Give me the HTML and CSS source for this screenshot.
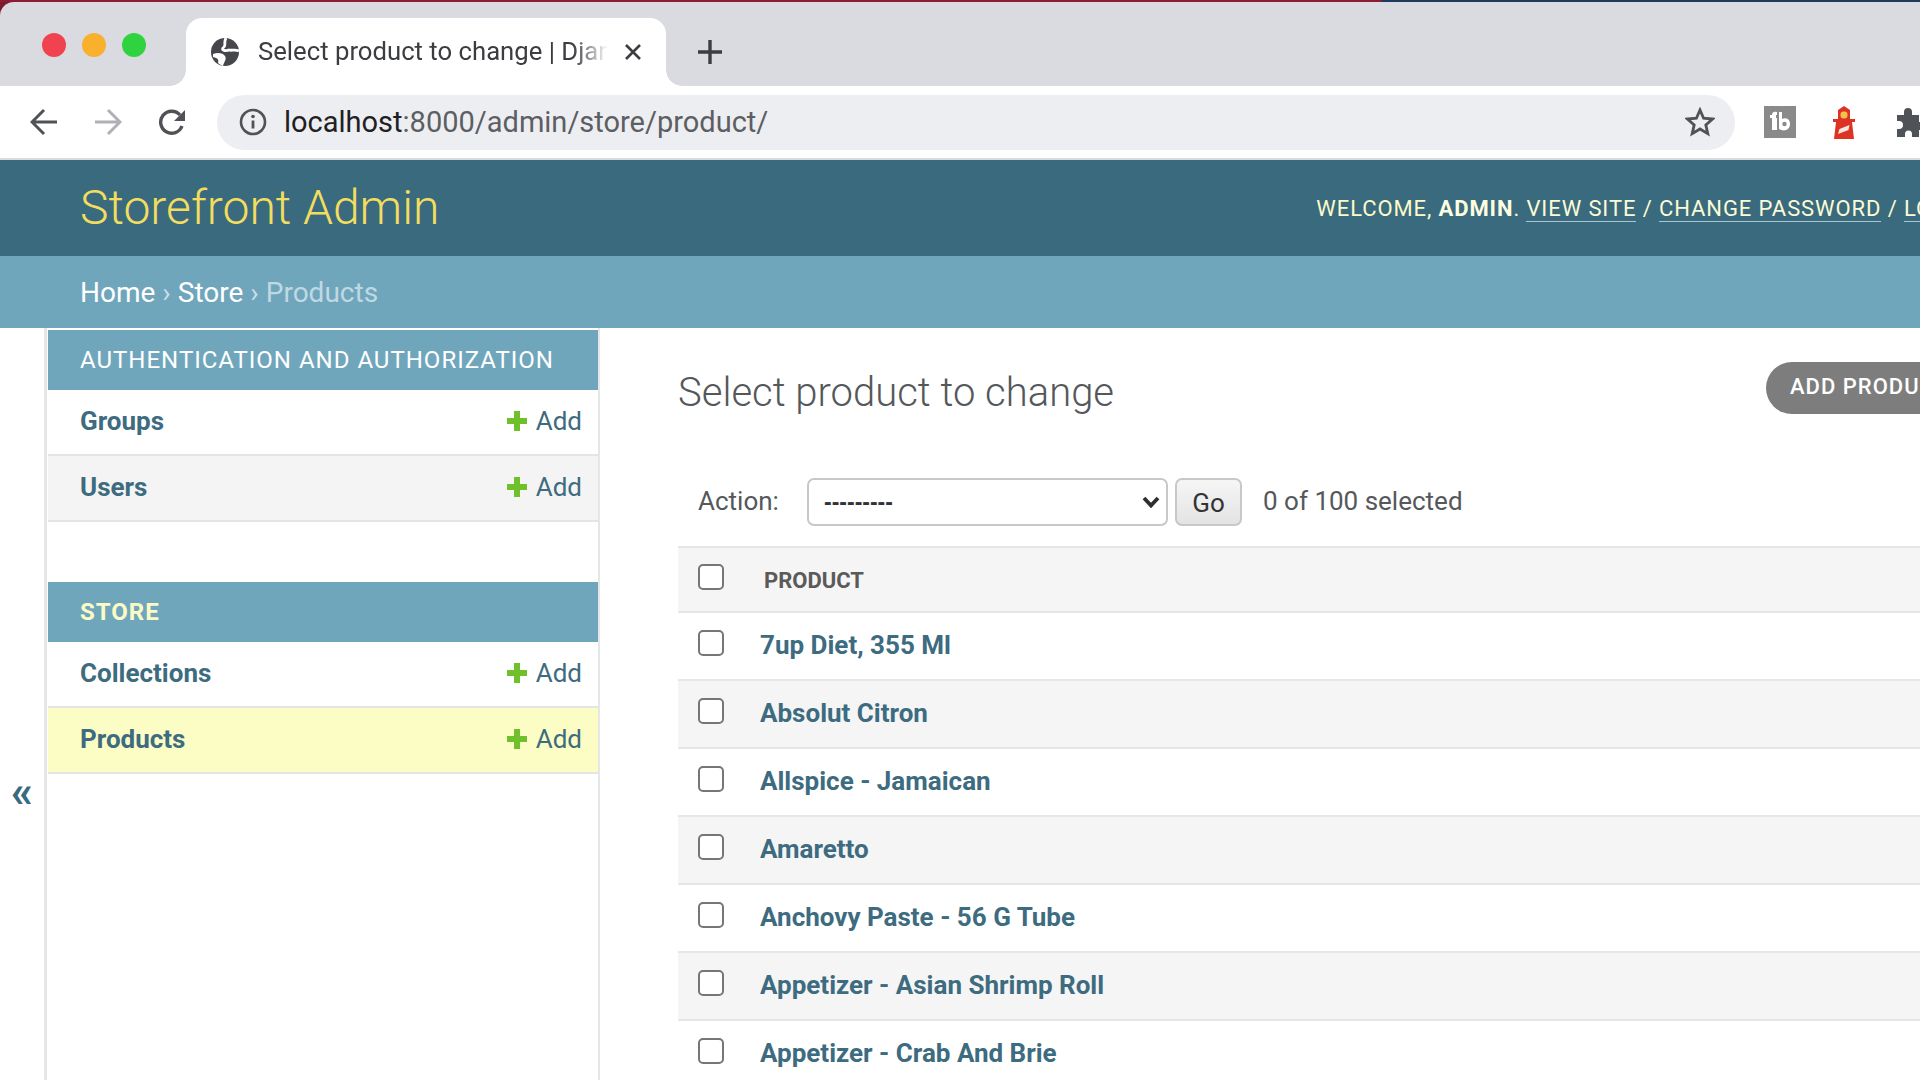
FILE: index.html
```html
<!DOCTYPE html>
<html lang="en">
<head>
    <meta charset="UTF-8">
    <title>Select product to change | Django site admin</title>
    <link rel="stylesheet" href="styles.css">
</head>
<body>
    <div class="topline"></div>

    <!-- Browser tabs -->
    <div class="tabstrip">
        <div class="lights">
            <span class="light light-red"></span>
            <span class="light light-yellow"></span>
            <span class="light light-green"></span>
        </div>
        <div class="tab">
            <svg class="globe" viewBox="0 0 28 28">
                <circle cx="14" cy="14" r="14" fill="#45474c"/>
                <path d="M15 0C12 5 16 8 12 10 C10 13 16 13 18 12 C21 13 24 11 28 13" stroke="#fff" stroke-width="2.800" fill="none"/>
                <path d="M2 16C7 14 12 15 14 18 C16 21 13 24 12 28 C10 27 8 26 7 25 C8 22 7 20 2 19z" fill="#fff"/>
            </svg>
            <span class="tab-title">Select product to change | Django site admin</span>
            <svg class="tab-close" viewBox="0 0 18 18"><path d="M2 2l14 14M16 2L2 16" stroke="#3c3d41" stroke-width="2.6" fill="none"/></svg>
        </div>
        <svg class="newtab" viewBox="0 0 26 26"><path d="M13 1v24M1 13h24" stroke="#3c3d41" stroke-width="3.4" fill="none"/></svg>
    </div>

    <!-- Address bar -->
    <div class="toolbar">
        <svg class="navicon" viewBox="0 0 28 28"><path d="M27 14H3M14 2L2 14l12 12" stroke="#505256" stroke-width="3" fill="none"/></svg>
        <svg class="navicon navicon-off" viewBox="0 0 28 28"><path d="M1 14h24M14 2l12 12-12 12" stroke="#b0b1b4" stroke-width="3" fill="none"/></svg>
        <svg class="navicon" viewBox="0 0 28 28"><path d="M24 18a11 11 0 1 1-2-11" stroke="#505256" stroke-width="3.400" fill="none"/><path d="M27 2v11H16z" fill="#505256"/></svg>
        <div class="urlbar">
            <svg class="infoicon" viewBox="0 0 28 28"><circle cx="14" cy="14" r="12" stroke="#505256" stroke-width="2.6" fill="none"/><path d="M14 12.5v8" stroke="#505256" stroke-width="2.8"/><circle cx="14" cy="8.5" r="1.8" fill="#505256"/></svg>
            <span class="url"><span class="url-host">localhost</span>:8000/admin/store/product/</span>
            <svg class="star" viewBox="0 0 30 30"><path d="M15 3l3.6 8.2 8.9.8-6.7 5.9 2 8.700-7.800-4.600-7.800 4.600 2-8.700L2.500 12l8.900-.8z" stroke="#505256" stroke-width="2.800" fill="none"/></svg>
        </div>
        <div class="ext ext-tb"><svg viewBox="0 0 32 32"><path d="M8 24V12H6V9h2c0-3 2-4 5-3v3h-1v3h1v12zM15 6h3v7c4-2 8 0 8 5 0 6-6 8-11 5z" fill="#fff"/><circle cx="20.500" cy="18" r="2.200" fill="#8a8a8a"/></svg></div>
        <svg class="ext-house" viewBox="0 0 22 33"><path d="M11 0l6 4v11H5V4z" fill="#dd3325"/><rect x="7.500" y="5.500" width="7" height="7" rx="3" fill="#f6c04d"/><path d="M0 13h22v3h-3l2 17H1l2-17H0z" fill="#dd3325"/><path d="M5 28l1.500-5 10-4-1 5z" fill="#f8e6df"/></svg>
        <svg class="ext-puzzle" viewBox="0 0 30 30"><path d="M3 8h7V5a4 4 0 0 1 8 0v3h7v7h3a4 4 0 0 1 0 8h-3v7h-7v-3a3.500 3.500 0 0 0-7 0v3H3v-8h2a4 4 0 0 0 0-8H3z" fill="#4f5256"/></svg>
    </div>

    <!-- Django header -->
    <div id="header">
        <h1 class="branding">Storefront Admin</h1>
        <div class="usertools">
            WELCOME, <strong>ADMIN</strong>.
            <a href="#">VIEW SITE</a> /
            <a href="#">CHANGE PASSWORD</a> /
            <a href="#">LOG OUT</a>
        </div>
    </div>
    <div class="breadcrumbs">
        <a href="#">Home</a> <span class="sep">›</span> <a href="#">Store</a> <span class="sep">›</span> <span class="here">Products</span>
    </div>

    <div class="content">
        <div class="toggle">«</div>

        <div class="sidebar">
            <div class="caption">Authentication and Authorization</div>
            <div class="row">
                <a class="model" href="#">Groups</a>
                <a class="add" href="#"><svg class="plus" viewBox="0 0 20 20"><path d="M10 0v20M0 10h20" stroke="#70c02c" stroke-width="6"/></svg>Add</a>
            </div>
            <div class="row row-alt">
                <a class="model" href="#">Users</a>
                <a class="add" href="#"><svg class="plus" viewBox="0 0 20 20"><path d="M10 0v20M0 10h20" stroke="#70c02c" stroke-width="6"/></svg>Add</a>
            </div>

            <div class="caption caption-current">Store</div>
            <div class="row">
                <a class="model" href="#">Collections</a>
                <a class="add" href="#"><svg class="plus" viewBox="0 0 20 20"><path d="M10 0v20M0 10h20" stroke="#70c02c" stroke-width="6"/></svg>Add</a>
            </div>
            <div class="row row-current">
                <a class="model" href="#">Products</a>
                <a class="add" href="#"><svg class="plus" viewBox="0 0 20 20"><path d="M10 0v20M0 10h20" stroke="#70c02c" stroke-width="6"/></svg>Add</a>
            </div>
        </div>

        <div class="main">
            <div class="titlebar">
                <h2 class="pagetitle">Select product to change</h2>
                <a class="addbutton" href="#">ADD PRODUCT +</a>
            </div>

            <div class="actions">
                <label class="action-label">Action:</label>
                <div class="selectwrap">
                    <select class="action-select"><option>---------</option></select>
                    <svg class="chevron" viewBox="0 0 18 12"><path d="M2 2l7 7.500 7-7.500" stroke="#2e2e2e" stroke-width="3.800" fill="none"/></svg>
                </div>
                <button class="gobutton" type="button">Go</button>
                <span class="counter">0 of 100 selected</span>
            </div>

            <div class="thead">
                <input class="check" type="checkbox">
                <span class="thead-label">PRODUCT</span>
            </div>
            <div class="tr"><input class="check" type="checkbox"><a href="#">7up Diet, 355 Ml</a></div>
            <div class="tr tr-alt"><input class="check" type="checkbox"><a href="#">Absolut Citron</a></div>
            <div class="tr"><input class="check" type="checkbox"><a href="#">Allspice - Jamaican</a></div>
            <div class="tr tr-alt"><input class="check" type="checkbox"><a href="#">Amaretto</a></div>
            <div class="tr"><input class="check" type="checkbox"><a href="#">Anchovy Paste - 56 G Tube</a></div>
            <div class="tr tr-alt"><input class="check" type="checkbox"><a href="#">Appetizer - Asian Shrimp Roll</a></div>
            <div class="tr"><input class="check" type="checkbox"><a href="#">Appetizer - Crab And Brie</a></div>
        </div>
    </div>
</body>
</html>
```

FILE: styles.css
```css
html, body {
    margin: 0;
    height: 100%;
    overflow: hidden;
    background: #7e1a30;
}
body {
    font-family: Roboto, "Liberation Sans", sans-serif;
    width: 1920px;
    height: 1080px;
    display: flex;
    flex-direction: column;
}
a {
    text-decoration: none;
}
.topline {
    height: 2px;
    flex: none;
    background: linear-gradient(to right, #8d1b33 72%, #1b3a5c 72%);
}

/* browser chrome */
.tabstrip {
    height: 84px;
    flex: none;
    background: #dadbe0;
    border-radius: 14px 0 0 0;
    display: flex;
    align-items: flex-end;
}
.lights {
    width: 186px;
    align-self: flex-start;
    display: flex;
    gap: 16px;
    padding: 31px 0 0 42px;
    box-sizing: border-box;
}
.light {
    width: 24px;
    height: 24px;
    border-radius: 50%;
}
.light-red { background: #f1434f; }
.light-yellow { background: #f8b02d; }
.light-green { background: #2fd33f; }
.tab {
    position: relative;
    width: 480px;
    height: 68px;
    background: #fff;
    border-radius: 16px 16px 0 0;
    display: flex;
    align-items: center;
    padding: 0 0 0 25px;
    box-sizing: border-box;
}
/* the flared feet of the active tab */
.tab::before, .tab::after {
    content: "";
    position: absolute;
    bottom: 0;
    width: 16px;
    height: 16px;
}
.tab::before {
    left: -16px;
    background: radial-gradient(circle at 0 0, transparent 15.500px, #fff 16px);
}
.tab::after {
    right: -16px;
    background: radial-gradient(circle at 100% 0, transparent 15.500px, #fff 16px);
}
.globe {
    width: 28px;
    height: 28px;
    flex: none;
}
.tab-title {
    width: 350px;
    margin: -2px 0 0 19px;
    font-size: 25.700px;
    color: #3c3d41;
    white-space: nowrap;
    overflow: hidden;
    -webkit-mask-image: linear-gradient(to right, #000 90%, transparent 100%);
    mask-image: linear-gradient(to right, #000 90%, transparent 100%);
}
.tab-close {
    width: 18px;
    height: 18px;
    margin-left: 16px;
}
.newtab {
    width: 26px;
    height: 26px;
    margin: 0 0 21px 31px;
}
.toolbar {
    height: 72px;
    flex: none;
    background: #fff;
    display: flex;
    align-items: center;
    padding-left: 30px;
    box-sizing: border-box;
}
.navicon {
    width: 28px;
    height: 28px;
    margin-right: 36px;
    flex: none;
}
.urlbar {
    width: 1518px;
    height: 55px;
    margin-left: -5px;
    background: #edeef1;
    border-radius: 28px;
    display: flex;
    align-items: center;
    padding: 0 20px 0 22px;
    box-sizing: border-box;
    flex: none;
}
.infoicon {
    width: 28px;
    height: 28px;
    flex: none;
}
.url {
    margin-left: 17px;
    font-size: 29px;
    color: #5c5e63;
    flex: 1;
}
.url-host {
    color: #1f2023;
}
.star {
    width: 30px;
    height: 30px;
}
.ext {
    width: 32px;
    height: 32px;
    margin-left: 29px;
    background: #8a8a8a;
    flex: none;
}
.ext svg {
    display: block;
}
.ext-house {
    width: 22px;
    height: 33px;
    margin-left: 37px;
    flex: none;
}
.ext-puzzle {
    width: 30px;
    height: 30px;
    margin-left: 39px;
    flex: none;
}

/* django header */
#header {
    height: 98px;
    flex: none;
    border-top: 2px solid #d9dade;
    background: #3a6a7e;
    display: flex;
    align-items: center;
    padding: 0 0 0 80px;
    box-sizing: border-box;
    white-space: nowrap;
}
.branding {
    margin: -1px 0 0;
    font-size: 48px;
    font-weight: 300;
    color: #f3dd5f;
}
.usertools {
    margin-left: 877px;
    font-size: 22px;
    letter-spacing: 0.9px;
    color: #fbfbc9;
}
.usertools strong {
    color: #fdfde0;
}
.usertools a {
    color: #fbfbd6;
    border-bottom: 1px solid #a9c6d2;
}
.breadcrumbs {
    height: 72px;
    flex: none;
    background: #70a6bc;
    display: flex;
    align-items: center;
    gap: 7px;
    padding-left: 80px;
    box-sizing: border-box;
    font-size: 28px;
    color: #c8dfe8;
}
.breadcrumbs a {
    color: #fff;
}
.breadcrumbs .here {
    color: #bfd9e3;
}

/* sidebar + list */
.content {
    flex: 1;
    min-height: 0;
    background: #fff;
    display: flex;
}
.toggle {
    width: 44px;
    flex: none;
    align-self: flex-start;
    margin-top: 439px;
    text-align: center;
    font-size: 44px;
    font-weight: 700;
    line-height: 50px;
    color: #3a6a7e;
}
.sidebar {
    width: 556px;
    flex: none;
    padding: 2px 0 0 1px;
    box-sizing: border-box;
    border-left: 3px solid #e6e6e6;
    border-right: 2px solid #e6e6e6;
}
.caption {
    height: 60px;
    background: #70a6bc;
    color: #fff;
    font-size: 24px;
    letter-spacing: 1px;
    text-transform: uppercase;
    display: flex;
    align-items: center;
    padding-left: 32px;
}
.caption-current {
    margin-top: 60px;
    font-weight: 700;
    color: #fbfbc6;
}
.row {
    height: 66px;
    box-sizing: border-box;
    border-bottom: 2px solid #e4e4e4;
    display: flex;
    align-items: center;
    justify-content: space-between;
    padding: 0 16px 2px 32px;
    font-size: 26px;
}
.row-alt {
    background: #f4f4f4;
}
.row-current {
    background: #fbfdc5;
}
.model {
    font-weight: 700;
    color: #3d6b80;
}
.add {
    display: flex;
    align-items: center;
    gap: 9px;
    color: #3d6b80;
}
.plus {
    width: 20px;
    height: 20px;
}
.main {
    flex: 1;
    min-width: 0;
    padding: 0 0 0 78px;
    box-sizing: border-box;
}
.titlebar {
    display: flex;
    justify-content: space-between;
    align-items: flex-start;
    height: 150px;
    padding-top: 34px;
    box-sizing: border-box;
}
.pagetitle {
    margin: 0;
    font-size: 40px;
    font-weight: 300;
    color: #55585b;
    line-height: 52px;
    padding-top: 5px;
}
.addbutton {
    height: 52px;
    width: 300px;
    margin-right: -146px;
    flex: none;
    background: #7d7d7d;
    color: #fff;
    border-radius: 26px;
    font-size: 22px;
    font-weight: 500;
    letter-spacing: 1px;
    line-height: 50px;
    padding-left: 24px;
    box-sizing: border-box;
}
.actions {
    height: 68px;
    display: flex;
    align-items: flex-start;
    padding-left: 20px;
    font-size: 26px;
    color: #55585b;
}
.action-label {
    width: 109px;
    line-height: 47px;
    flex: none;
}
.selectwrap {
    position: relative;
    width: 361px;
    height: 48px;
    flex: none;
}
.action-select {
    width: 100%;
    height: 100%;
    appearance: none;
    background: #fff;
    border: 2px solid #c8c8c8;
    border-radius: 7px;
    padding-left: 15px;
    font-family: "Liberation Sans", sans-serif;
    font-size: 23px;
    font-weight: 700;
    color: #333;
    outline: none;
}
.chevron {
    position: absolute;
    right: 8px;
    top: 18px;
    width: 18px;
    height: 12px;
}
.gobutton {
    width: 67px;
    height: 48px;
    margin-left: 7px;
    flex: none;
    background: linear-gradient(#f6f6f6, #e3e3e3);
    border: 2px solid #c8c8c8;
    border-radius: 7px;
    font-family: Roboto, sans-serif;
    font-size: 26px;
    color: #333;
    padding: 2px 0 0;
}
.counter {
    margin-left: 21px;
    line-height: 47px;
}
.thead, .tr {
    display: flex;
    align-items: center;
    box-sizing: border-box;
    border-bottom: 2px solid #e6e6e6;
    padding-left: 20px;
}
.thead {
    height: 67px;
    border-top: 2px solid #e6e6e6;
    background: #f5f5f5;
}
.thead-label {
    margin-left: 40px;
    font-size: 22px;
    font-weight: 700;
    color: #5a5a5a;
    padding-top: 2px;
}
.tr {
    height: 68px;
}
.tr-alt {
    background: #f5f5f5;
}
.tr a {
    margin: -2px 0 0 36px;
    font-size: 26px;
    font-weight: 700;
    color: #3d6b80;
}
.check {
    width: 26px;
    height: 26px;
    margin: -6px 0 0;
    flex: none;
    appearance: none;
    background: #fff;
    border: 2px solid #767676;
    border-radius: 5px;
}
```
